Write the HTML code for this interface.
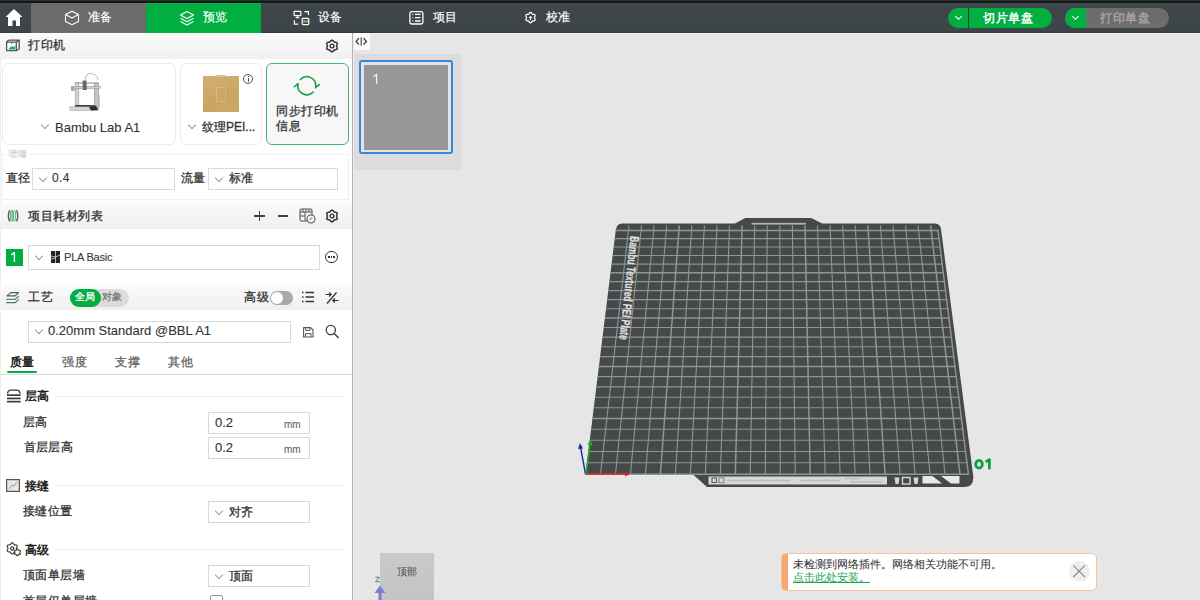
<!DOCTYPE html>
<html><head><meta charset="utf-8">
<style>
*{box-sizing:border-box;margin:0;padding:0}
html,body{width:1200px;height:600px;overflow:hidden;background:#e6e6e6;font-family:"Liberation Sans",sans-serif;}
.a{position:absolute}
.t{position:absolute;white-space:nowrap;line-height:1;-webkit-text-stroke-width:0.3px}
#top{left:0;top:0;width:1200px;height:33px;background:linear-gradient(#2b3131 0,#2b3131 1px,#121818 1px,#121818 3px,#4a5153 3px,#3f4649 4.5px,#3e4548 31px,#363c3e 32px,#363c3e 33px)}
#topline{left:0;top:0;width:1200px;height:3px;background:#161616}
.tab{position:absolute;top:3px;height:30px;color:#fff;font-size:13px}
.combo{position:absolute;background:#fff;border:1px solid #d9d9d9}
.chev{position:absolute;width:6px;height:6px;border-right:1px solid #9a9a9a;border-bottom:1px solid #9a9a9a;transform:rotate(45deg)}
.hdr{position:absolute;left:0;width:352px;background:linear-gradient(#fafafa,#f0f0f0)}
.lbl{font-size:12px;color:#333;letter-spacing:0.4px}
</style></head><body>
<!-- top bar -->
<div id="top" class="a"></div>
<div class="a" style="left:354px;top:33px;width:846px;height:1px;background:#eeeeee"></div>
<!-- home -->
<svg class="a" style="left:5px;top:8px" width="18" height="19" viewBox="0 0 18 19">
<path d="M9 1 L17.5 9 L15 9 L15 18 L11 18 L11 12.5 L7.5 12.5 L7.5 18 L3 18 L3 9 L0.5 9 Z" fill="#fff"/>
</svg>
<!-- tab prepare -->
<div class="a" style="left:31px;top:3px;width:115px;height:30px;background:#6b6b6b"></div>
<svg class="a" style="left:64px;top:10px" width="16" height="16" viewBox="0 0 16 16">
<path d="M8 1.2 L14.5 4.6 L14.5 11.4 L8 14.8 L1.5 11.4 L1.5 4.6 Z M1.5 4.6 L8 8 L14.5 4.6" fill="none" stroke="#fff" stroke-width="1.1" stroke-linejoin="round"/>
</svg>
<div class="t" style="left:88px;top:11px;color:#fff;font-size:12px;-webkit-text-stroke-width:0.15px">准备</div>
<!-- tab preview -->
<div class="a" style="left:146px;top:3px;width:115px;height:30px;background:#00ae42"></div>
<svg class="a" style="left:179px;top:10px" width="16" height="16" viewBox="0 0 16 16">
<path d="M8 1.5 L14.5 5 L8 8.5 L1.5 5 Z" fill="none" stroke="#fff" stroke-width="1.1" stroke-linejoin="round"/>
<path d="M1.5 8.2 L8 11.7 L14.5 8.2 M1.5 11.4 L8 14.9 L14.5 11.4" fill="none" stroke="#fff" stroke-width="1.1" stroke-linejoin="round"/>
</svg>
<div class="t" style="left:203px;top:11px;color:#fff;font-size:12px;-webkit-text-stroke-width:0.15px">预览</div>
<!-- tab device -->
<svg class="a" style="left:290px;top:8px" width="22" height="20" viewBox="290 8 22 20">
<rect x="294.1" y="11.4" width="6.8" height="4.2" rx="0.6" fill="none" stroke="#fff" stroke-width="1.2"/>
<path d="M297.5 15.6 V17.4 M295.8 17.6 H299.2" stroke="#fff" stroke-width="1.1"/>
<path d="M304.3 11.6 H308.4 V15" fill="none" stroke="#fff" stroke-width="1.2"/>
<path d="M294.4 20.2 V24.2 H298.2" fill="none" stroke="#fff" stroke-width="1.2"/>
<rect x="302.2" y="18.4" width="6.6" height="6.2" rx="0.8" fill="none" stroke="#fff" stroke-width="1.2"/>
<path d="M304 20.2 V23 M307 20.2 V23 M304 20.3 L305.5 22 L307 20.3" fill="none" stroke="#ddd" stroke-width="0.7"/>
</svg>
<div class="t" style="left:318px;top:11px;color:#fff;font-size:12px;-webkit-text-stroke-width:0.15px">设备</div>
<!-- tab project -->
<svg class="a" style="left:405px;top:8px" width="22" height="20" viewBox="405 8 22 20">
<rect x="409.9" y="11.6" width="13" height="12.4" rx="1.8" fill="none" stroke="#fff" stroke-width="1.3"/>
<path d="M412.3 14.4 H413.3 M412.3 17.7 H413.3 M412.3 21 H413.3" stroke="#fff" stroke-width="1.1"/>
<path d="M415 14.4 H420.5 M415 17.7 H420.5 M415 21 H420.5" stroke="#fff" stroke-width="1.3"/>
</svg>
<div class="t" style="left:433px;top:11px;color:#fff;font-size:12px;-webkit-text-stroke-width:0.15px">项目</div>
<!-- tab calib -->
<svg class="a" style="left:520px;top:8px" width="22" height="20" viewBox="520 8 22 20">
<path d="M534.50 17.60 L534.56 17.96 L534.73 18.35 L534.94 18.79 L535.10 19.28 L535.14 19.76 L535.00 20.20 L534.69 20.54 L534.25 20.75 L533.75 20.85 L533.26 20.89 L532.84 20.94 L532.50 21.06 L532.22 21.30 L531.97 21.64 L531.69 22.04 L531.35 22.43 L530.95 22.70 L530.50 22.80 L530.05 22.70 L529.65 22.43 L529.31 22.04 L529.03 21.64 L528.78 21.30 L528.50 21.06 L528.16 20.94 L527.74 20.89 L527.25 20.85 L526.75 20.75 L526.31 20.54 L526.00 20.20 L525.86 19.76 L525.90 19.28 L526.06 18.79 L526.27 18.35 L526.44 17.96 L526.50 17.60 L526.44 17.24 L526.27 16.85 L526.06 16.41 L525.90 15.92 L525.86 15.44 L526.00 15.00 L526.31 14.66 L526.75 14.45 L527.25 14.35 L527.74 14.31 L528.16 14.26 L528.50 14.14 L528.78 13.90 L529.03 13.56 L529.31 13.16 L529.65 12.77 L530.05 12.50 L530.50 12.40 L530.95 12.50 L531.35 12.77 L531.69 13.16 L531.97 13.56 L532.22 13.90 L532.50 14.14 L532.84 14.26 L533.26 14.31 L533.75 14.35 L534.25 14.45 L534.69 14.66 L535.00 15.00 L535.14 15.44 L535.10 15.92 L534.94 16.41 L534.73 16.85 L534.56 17.24Z" fill="none" stroke="#fff" stroke-width="1.3"/>
<path d="M528.6 18 L530.5 15.8 L532.4 18 Z M529.9 17.6 H531.1 V20 H529.9 Z" fill="#fff"/>
</svg>
<div class="t" style="left:546px;top:11px;color:#fff;font-size:12px;-webkit-text-stroke-width:0.15px">校准</div>
<!-- right buttons -->
<div class="a" style="left:948px;top:8px;width:104px;height:20px;border-radius:10px;background:#00ae42"></div>
<div class="a" style="left:968px;top:8px;width:1px;height:20px;background:#2d3b33"></div>
<div class="chev" style="left:956px;top:13.5px;border-color:#fff;width:5px;height:5px;border-width:0 1.3px 1.3px 0"></div>
<div class="t" style="left:983px;top:11.5px;color:#fff;font-size:12px;letter-spacing:0.6px;-webkit-text-stroke-width:0.45px">切片单盘</div>
<div class="a" style="left:1065px;top:8px;width:104px;height:20px;border-radius:10px;background:#6d6d6d;overflow:hidden"><div class="a" style="left:0;top:0;width:21px;height:20px;background:#00ae42"></div></div>
<div class="chev" style="left:1073px;top:13.5px;border-color:#fff;width:5px;height:5px;border-width:0 1.3px 1.3px 0"></div>
<div class="t" style="left:1100px;top:11.5px;color:#a9a9a9;font-size:12px;letter-spacing:0.6px;-webkit-text-stroke-width:0.35px">打印单盘</div>

<!-- LEFT PANEL -->
<div class="a" style="left:0;top:33px;width:352px;height:567px;background:#fff"></div>
<div class="a" style="left:352px;top:33px;width:1px;height:567px;background:#b2b2b2"></div><div class="a" style="left:353px;top:33px;width:1px;height:567px;background:#ededed"></div>
<div class="a" style="left:0;top:33px;width:1px;height:567px;background:#efefef"></div>
<!-- header printer -->
<div class="hdr" style="top:34px;height:25px"></div>
<svg class="a" style="left:2px;top:34px" width="24" height="24" viewBox="2 34 24 24">
<path d="M6.6 42.2 H16.3 V50.7 H6.6 Z" fill="#fff" stroke="#555" stroke-width="1.3" stroke-linejoin="round"/>
<path d="M6.6 42.2 Q7.4 40.1 9.2 40.1 H19.2 L16.3 42.2 M16.3 50.7 L19.2 48.7 V40.1" fill="none" stroke="#555" stroke-width="1.3" stroke-linejoin="round"/>
<path d="M8.2 49.4 L10.8 46.6 H15.2 V49.4 Z" fill="#2ea85c"/>
<path d="M10.6 42.6 H12.8 L11.7 44.4 Z" fill="#666"/>
</svg>
<div class="t lbl" style="left:28px;top:39px;font-size:12px;letter-spacing:0.5px;color:#333">打印机</div>
<svg class="a" style="left:324.4px;top:37.6px" width="16" height="16" viewBox="0 0 16 16"><path d="M12.60 8.00 L12.66 8.41 L12.83 8.85 L13.02 9.35 L13.17 9.88 L13.18 10.42 L13.02 10.90 L12.69 11.28 L12.21 11.54 L11.68 11.68 L11.15 11.75 L10.68 11.83 L10.30 11.98 L9.98 12.24 L9.68 12.60 L9.35 13.02 L8.96 13.42 L8.50 13.70 L8.00 13.80 L7.50 13.70 L7.04 13.42 L6.65 13.02 L6.32 12.60 L6.02 12.24 L5.70 11.98 L5.32 11.83 L4.85 11.75 L4.32 11.68 L3.79 11.54 L3.31 11.28 L2.98 10.90 L2.82 10.42 L2.83 9.88 L2.98 9.35 L3.17 8.85 L3.34 8.41 L3.40 8.00 L3.34 7.59 L3.17 7.15 L2.98 6.65 L2.83 6.12 L2.82 5.58 L2.98 5.10 L3.31 4.72 L3.79 4.46 L4.32 4.32 L4.85 4.25 L5.32 4.17 L5.70 4.02 L6.02 3.76 L6.32 3.40 L6.65 2.98 L7.04 2.58 L7.50 2.30 L8.00 2.20 L8.50 2.30 L8.96 2.58 L9.35 2.98 L9.68 3.40 L9.98 3.76 L10.30 4.02 L10.68 4.17 L11.15 4.25 L11.68 4.32 L12.21 4.46 L12.69 4.72 L13.02 5.10 L13.18 5.58 L13.17 6.12 L13.02 6.65 L12.83 7.15 L12.66 7.59Z" fill="none" stroke="#2e2e2e" stroke-width="1.5" stroke-linejoin="round"/><circle cx="8" cy="8" r="1.9" fill="none" stroke="#2e2e2e" stroke-width="1.4"/></svg>
<!-- cards -->
<div class="a" style="left:2px;top:63px;width:174px;height:82px;border:1px solid #ececec;border-radius:6px;background:#fff"></div>
<svg class="a" style="left:65px;top:70px" width="40" height="45" viewBox="0 0 40 45">
<path d="M20 10.5 Q21 2.5 26.3 3.4 Q32.5 4.5 33 10" fill="none" stroke="#a8a8a8" stroke-width="0.8"/>
<rect x="10" y="12.3" width="23.5" height="1.6" fill="#b9b9b9"/>
<rect x="10.2" y="12.5" width="3.6" height="24.5" fill="#d3d3d3" stroke="#9a9a9a" stroke-width="0.6"/>
<rect x="29.3" y="13" width="4" height="27" fill="#c4c4c4" stroke="#8a8a8a" stroke-width="0.6"/>
<rect x="6.5" y="16.4" width="29" height="2.1" fill="#cfcfcf" stroke="#8c8c8c" stroke-width="0.5"/>
<rect x="6" y="16" width="3.5" height="5" fill="#aaa"/>
<path d="M17.6 10.5 L21.5 10.5 L21.8 19.9 L17.6 19.9 Z" fill="#6a6a6a"/>
<path d="M10 35 H29 L28.5 37.5 H10 Z" fill="#3a3a3a"/>
<path d="M4.5 36.8 H33 L32.5 40.5 H5 Z" fill="#d6d6d6" stroke="#9c9c9c" stroke-width="0.5"/>
<path d="M24 37 L31 35.5 L33 40 L26 40.5 Z" fill="#2e2e2e"/>
<path d="M34.5 25 L34.5 38" stroke="#aaa" stroke-width="0.6"/>
</svg>
<div class="chev" style="left:42px;top:122px"></div>
<div class="t" style="left:55px;top:121px;font-size:13px;color:#333;-webkit-text-stroke-width:0.1px">Bambu Lab A1</div>

<div class="a" style="left:180px;top:63px;width:82px;height:82px;border:1px solid #ececec;border-radius:6px;background:#fff"></div>
<div class="a" style="left:203px;top:76px;width:36px;height:36px;background:linear-gradient(160deg,#d2b072,#c9a562 60%,#cda96a)"></div>
<div class="a" style="left:216px;top:74.5px;width:10px;height:2px;background:#d8c49a;border-radius:1px"></div>
<div class="a" style="left:216px;top:87px;width:10px;height:15px;border:1px solid rgba(255,240,210,0.22)"></div>
<div class="a" style="left:243px;top:74px;width:10px;height:10px;border:1px solid #555;border-radius:50%"></div>
<div class="a" style="left:247.5px;top:76px;width:1px;height:1.2px;background:#555"></div>
<div class="a" style="left:247.5px;top:78px;width:1px;height:4px;background:#555"></div>
<div class="chev" style="left:189px;top:122px"></div>
<div class="t" style="left:202px;top:121px;font-size:12px;letter-spacing:0px;color:#333">纹理PEI...</div>

<div class="a" style="left:266px;top:63px;width:83px;height:82px;border:1px solid #3fb86a;border-radius:6px;background:#f7f7f7"></div>
<svg class="a" style="left:290px;top:70px" width="35" height="32" viewBox="290 70 35 32">
<path d="M300.33 79.45 A9 9 0 0 1 315.71 86.95" fill="none" stroke="#1a9e48" stroke-width="1.6" stroke-linecap="round"/>
<path d="M313.27 91.95 A9 9 0 0 1 297.89 84.45" fill="none" stroke="#1a9e48" stroke-width="1.6" stroke-linecap="round"/>
<path d="M319.28 84.66 L315.60 87.74" fill="none" stroke="#1a9e48" stroke-width="1.6" stroke-linecap="round" stroke-linejoin="round"/>
<path d="M294.32 86.74 L298.00 83.66" fill="none" stroke="#1a9e48" stroke-width="1.6" stroke-linecap="round" stroke-linejoin="round"/>
</svg>
<div class="t" style="left:276px;top:104px;font-size:12px;letter-spacing:0.5px;color:#333;line-height:15px;white-space:normal;width:70px">同步打印机<br>信息</div>

<!-- nozzle group -->
<div class="a" style="left:2px;top:154px;width:347px;height:46px;border:1px solid #efefef"></div>
<div class="t" style="left:7px;top:149.5px;font-size:9px;color:#c4c4c4;background:#fff;padding:0 2px;-webkit-text-stroke-width:0">喷嘴</div>
<div class="t lbl" style="left:5.5px;top:172px">直径</div>
<div class="combo" style="left:32px;top:168px;width:143px;height:22px"></div>
<div class="chev" style="left:40px;top:175px"></div>
<div class="t lbl" style="left:52px;top:172px;-webkit-text-stroke-width:0.1px">0.4</div>
<div class="t lbl" style="left:181px;top:172px">流量</div>
<div class="combo" style="left:208px;top:168px;width:130px;height:22px"></div>
<div class="chev" style="left:216px;top:175px"></div>
<div class="t lbl" style="left:229px;top:172px">标准</div>

<!-- filament header -->
<div class="hdr" style="top:203px;height:26px"></div>
<svg class="a" style="left:2px;top:204px" width="24" height="24" viewBox="2 204 24 24">
<path d="M9.6 210.2 Q7.2 215.8 9.6 221.4 M16.6 210.2 Q19 215.8 16.6 221.4" fill="none" stroke="#5e5e5e" stroke-width="1.4"/>
<rect x="10.6" y="210.6" width="2.4" height="10.4" rx="1.1" fill="#9fe0b5" stroke="#3f9e62" stroke-width="0.8"/>
<rect x="13.4" y="210.6" width="2.2" height="10.4" rx="1.1" fill="#d8f2e0" stroke="#3f9e62" stroke-width="0.7"/>
</svg>
<div class="t" style="left:28px;top:209.5px;font-size:12px;letter-spacing:0.5px;color:#333">项目耗材列表</div>
<div class="a" style="left:254px;top:215.3px;width:10.5px;height:1.3px;background:#444"></div>
<div class="a" style="left:258.6px;top:210.7px;width:1.3px;height:10.5px;background:#444"></div>
<div class="a" style="left:277.8px;top:215.3px;width:10.5px;height:1.3px;background:#444"></div>
<svg class="a" style="left:299px;top:208px" width="17" height="16" viewBox="0 0 17 16">
<rect x="1" y="1" width="12" height="12" rx="1.5" fill="none" stroke="#555" stroke-width="1.1"/>
<path d="M1 4 H13 M4 1 V4 M7 1 V4 M10 1 V4 M1 8 H6 M6 4 V13" stroke="#555" stroke-width="1"/>
<circle cx="12" cy="11" r="4" fill="#f3f3f3" stroke="#555" stroke-width="1.1"/>
<path d="M10.5 12 L13 9.5" stroke="#555" stroke-width="1"/>
</svg>
<svg class="a" style="left:324.2px;top:208.2px" width="16" height="16" viewBox="0 0 16 16"><path d="M12.60 8.00 L12.66 8.41 L12.83 8.85 L13.02 9.35 L13.17 9.88 L13.18 10.42 L13.02 10.90 L12.69 11.28 L12.21 11.54 L11.68 11.68 L11.15 11.75 L10.68 11.83 L10.30 11.98 L9.98 12.24 L9.68 12.60 L9.35 13.02 L8.96 13.42 L8.50 13.70 L8.00 13.80 L7.50 13.70 L7.04 13.42 L6.65 13.02 L6.32 12.60 L6.02 12.24 L5.70 11.98 L5.32 11.83 L4.85 11.75 L4.32 11.68 L3.79 11.54 L3.31 11.28 L2.98 10.90 L2.82 10.42 L2.83 9.88 L2.98 9.35 L3.17 8.85 L3.34 8.41 L3.40 8.00 L3.34 7.59 L3.17 7.15 L2.98 6.65 L2.83 6.12 L2.82 5.58 L2.98 5.10 L3.31 4.72 L3.79 4.46 L4.32 4.32 L4.85 4.25 L5.32 4.17 L5.70 4.02 L6.02 3.76 L6.32 3.40 L6.65 2.98 L7.04 2.58 L7.50 2.30 L8.00 2.20 L8.50 2.30 L8.96 2.58 L9.35 2.98 L9.68 3.40 L9.98 3.76 L10.30 4.02 L10.68 4.17 L11.15 4.25 L11.68 4.32 L12.21 4.46 L12.69 4.72 L13.02 5.10 L13.18 5.58 L13.17 6.12 L13.02 6.65 L12.83 7.15 L12.66 7.59Z" fill="none" stroke="#2e2e2e" stroke-width="1.5" stroke-linejoin="round"/><circle cx="8" cy="8" r="1.9" fill="none" stroke="#2e2e2e" stroke-width="1.4"/></svg>
<!-- filament row -->
<div class="a" style="left:6px;top:249px;width:17px;height:17px;background:#00ae42"></div>
<svg class="a" style="left:0;top:240px" width="30" height="30" viewBox="0 240 30 30"><path d="M11.2 254.8 L14.4 252.6 V262" fill="none" stroke="#fff" stroke-width="1.4" stroke-linejoin="round"/></svg>
<div class="combo" style="left:28px;top:245px;width:292px;height:25px"></div>
<div class="chev" style="left:36px;top:253px"></div>
<svg class="a" style="left:51px;top:251px" width="9" height="12" viewBox="0 0 9 12">
<rect x="0" y="0" width="9" height="12" fill="#222"/>
<path d="M4.5 0 V12 M0 5 L4.5 6 L9 4 M0 8 L4.5 7" stroke="#ddd" stroke-width="0.8" fill="none"/>
</svg>
<div class="t" style="left:64px;top:251.5px;font-size:11px;color:#3a3a3a;letter-spacing:-0.2px;-webkit-text-stroke-width:0.1px">PLA Basic</div>
<div class="a" style="left:325.3px;top:250.6px;width:12.6px;height:12.6px;border:1.5px solid #333;border-radius:50%"></div>
<div class="a" style="left:328.3px;top:256.1px;width:1.6px;height:1.6px;background:#333"></div>
<div class="a" style="left:330.8px;top:256.1px;width:1.6px;height:1.6px;background:#333"></div>
<div class="a" style="left:333.3px;top:256.1px;width:1.6px;height:1.6px;background:#333"></div>

<!-- process header -->
<div class="hdr" style="top:285px;height:25px"></div>
<svg class="a" style="left:2px;top:286px" width="22" height="22" viewBox="0 0 22 22">
<path d="M4.8 9.9 L8.8 6.6 H16.5 L13.2 9.9 Z" fill="none" stroke="#5a5a5a" stroke-width="1.1" stroke-linejoin="round"/>
<path d="M4.8 13.3 H13.2 L16.5 10.2" fill="none" stroke="#3f9a62" stroke-width="1.3" stroke-linecap="round"/>
<path d="M4.8 16.7 H13.2 L16.5 13.6" fill="none" stroke="#5f6b64" stroke-width="1.2" stroke-linecap="round"/>
</svg>
<div class="t" style="left:28px;top:291px;font-size:12px;letter-spacing:0.5px;color:#333">工艺</div>
<div class="a" style="left:70px;top:288.5px;width:59px;height:18px;border-radius:9px;background:#dcdcdc"></div>
<div class="a" style="left:70px;top:288.5px;width:31px;height:18px;border-radius:9px;background:#00ae42"></div>
<div class="t" style="left:75px;top:292px;font-size:10px;color:#fff">全局</div>
<div class="t" style="left:102px;top:292px;font-size:10px;color:#777">对象</div>
<div class="t" style="left:244px;top:291px;font-size:12px;letter-spacing:0.5px;color:#333">高级</div>
<div class="a" style="left:270px;top:290.5px;width:23px;height:14px;border-radius:7px;background:#a9a9a9"></div>
<div class="a" style="left:271px;top:291.5px;width:12px;height:12px;border-radius:50%;background:#fff"></div>
<svg class="a" style="left:301px;top:291px" width="14" height="12" viewBox="0 0 14 12">
<path d="M1 1.5 H2.5 M4.5 1.5 H13 M1 6 H2.5 M4.5 6 H13 M1 10.5 H2.5 M4.5 10.5 H13" stroke="#333" stroke-width="1.4"/>
</svg>
<svg class="a" style="left:324px;top:290px" width="16" height="16" viewBox="0 0 16 16">
<path d="M3 13.5 L12.5 2.5" stroke="#333" stroke-width="1.3"/>
<path d="M1.5 4.5 H7 M5 2.5 L7.2 4.5 L5 6.5 M14.5 10.5 H9 M11 8.5 L8.8 10.5 L11 12.5" fill="none" stroke="#333" stroke-width="1.2"/>
</svg>
<div class="combo" style="left:28px;top:320.5px;width:263px;height:22px"></div>
<div class="chev" style="left:36px;top:327px"></div>
<div class="t" style="left:48px;top:324px;font-size:13px;color:#333;-webkit-text-stroke-width:0.1px">0.20mm Standard @BBL A1</div>
<svg class="a" style="left:300px;top:324px" width="16" height="16" viewBox="300 324 16 16">
<path d="M303.6 327.6 H310.6 L313 330 V337 H303.6 Z" fill="none" stroke="#555" stroke-width="1.1" stroke-linejoin="round"/>
<path d="M305.8 327.8 V330.4 H309.8 V327.8 M305.6 336.8 V333.6 H311 V336.8" fill="none" stroke="#555" stroke-width="1"/>
</svg>
<svg class="a" style="left:322px;top:322px" width="20" height="20" viewBox="322 322 20 20">
<circle cx="330.8" cy="330" r="4.6" fill="none" stroke="#3a3a3a" stroke-width="1.3"/>
<path d="M334.2 333.4 L338.2 337.4" stroke="#3a3a3a" stroke-width="1.4" stroke-linecap="round"/>
</svg>
<!-- tabs -->
<div class="t" style="left:9.5px;top:356px;font-size:12px;letter-spacing:0.5px;color:#222;font-weight:bold;-webkit-text-stroke-width:0">质量</div>
<div class="a" style="left:7px;top:371px;width:30px;height:2px;background:#00ae42;border-radius:1px"></div>
<div class="t" style="left:62px;top:356px;font-size:12px;letter-spacing:0.5px;color:#666">强度</div>
<div class="t" style="left:115px;top:356px;font-size:12px;letter-spacing:0.5px;color:#666">支撑</div>
<div class="t" style="left:168px;top:356px;font-size:12px;letter-spacing:0.5px;color:#666">其他</div>
<div class="a" style="left:0;top:374px;width:352px;height:1px;background:#dadada"></div>

<!-- settings -->
<svg class="a" style="left:2px;top:384px" width="24" height="24" viewBox="0 0 24 24">
<path d="M5.6 9.8 Q5.6 6.2 9 6.2 H14.6 Q18 6.2 18 9.8" fill="none" stroke="#3c3c3c" stroke-width="1.3"/>
<rect x="5" y="10.3" width="13.6" height="1.7" fill="#3c3c3c"/>
<rect x="5" y="13.6" width="13.6" height="1.7" fill="#3c3c3c"/>
<rect x="5" y="16.8" width="13.6" height="1.7" fill="#3c3c3c"/>
</svg>
<div class="t" style="left:25px;top:389.5px;font-size:12px;color:#222;font-weight:bold;-webkit-text-stroke-width:0">层高</div>
<div class="a" style="left:55px;top:396px;width:288px;height:1px;background:#ececec"></div>
<div class="t lbl" style="left:23px;top:416px">层高</div>
<div class="combo" style="left:208px;top:412px;width:102px;height:22px"></div>
<div class="t" style="left:215px;top:416px;font-size:13px;color:#333;-webkit-text-stroke-width:0.1px">0.2</div>
<div class="t" style="left:284px;top:420px;font-size:10px;color:#666;-webkit-text-stroke-width:0.1px">mm</div>
<div class="t lbl" style="left:23.5px;top:441px">首层层高</div>
<div class="combo" style="left:208px;top:437px;width:102px;height:22px"></div>
<div class="t" style="left:215px;top:441px;font-size:13px;color:#333;-webkit-text-stroke-width:0.1px">0.2</div>
<div class="t" style="left:284px;top:445px;font-size:10px;color:#666;-webkit-text-stroke-width:0.1px">mm</div>

<svg class="a" style="left:6px;top:479px" width="14" height="13" viewBox="0 0 14 13">
<rect x="0.6" y="0.6" width="12.8" height="11.8" fill="#e6e6e6" stroke="#555" stroke-width="1.2"/>
<path d="M3 10 L6 6 L8 7 L11 3" fill="none" stroke="#888" stroke-width="0.8"/>
</svg>
<div class="t" style="left:25px;top:479.5px;font-size:12px;color:#222;font-weight:bold;-webkit-text-stroke-width:0">接缝</div>
<div class="a" style="left:55px;top:485px;width:288px;height:1px;background:#ececec"></div>
<div class="t lbl" style="left:23px;top:505px">接缝位置</div>
<div class="combo" style="left:208px;top:501px;width:102px;height:22px"></div>
<div class="chev" style="left:216px;top:508px"></div>
<div class="t" style="left:229px;top:505.5px;font-size:12px;color:#333">对齐</div>

<svg class="a" style="left:2px;top:536px" width="24" height="24" viewBox="0 0 24 24">
<path d="M14.40 12.40 L14.48 12.77 L14.68 13.19 L14.93 13.67 L15.13 14.20 L15.19 14.73 L15.05 15.20 L14.71 15.56 L14.22 15.77 L13.66 15.86 L13.12 15.89 L12.66 15.92 L12.30 16.04 L12.01 16.29 L11.76 16.68 L11.47 17.13 L11.11 17.57 L10.68 17.89 L10.20 18.00 L9.72 17.89 L9.29 17.57 L8.93 17.13 L8.64 16.68 L8.39 16.29 L8.10 16.04 L7.74 15.92 L7.28 15.89 L6.74 15.86 L6.18 15.77 L5.69 15.56 L5.35 15.20 L5.21 14.73 L5.27 14.20 L5.47 13.67 L5.72 13.19 L5.92 12.77 L6.00 12.40 L5.92 12.03 L5.72 11.61 L5.47 11.13 L5.27 10.60 L5.21 10.07 L5.35 9.60 L5.69 9.24 L6.18 9.03 L6.74 8.94 L7.28 8.91 L7.74 8.88 L8.10 8.76 L8.39 8.51 L8.64 8.12 L8.93 7.67 L9.29 7.23 L9.72 6.91 L10.20 6.80 L10.68 6.91 L11.11 7.23 L11.47 7.67 L11.76 8.12 L12.01 8.51 L12.30 8.76 L12.66 8.88 L13.12 8.91 L13.66 8.94 L14.22 9.03 L14.71 9.24 L15.05 9.60 L15.19 10.07 L15.13 10.60 L14.93 11.13 L14.68 11.61 L14.48 12.03Z" fill="none" stroke="#444" stroke-width="1.2"/>
<circle cx="10.2" cy="12.4" r="1.6" fill="none" stroke="#444" stroke-width="1.3"/>
<path d="M17.85 16.40 L17.90 16.62 L18.03 16.86 L18.20 17.15 L18.34 17.47 L18.38 17.79 L18.30 18.07 L18.09 18.29 L17.79 18.41 L17.45 18.45 L17.12 18.45 L16.84 18.46 L16.62 18.52 L16.46 18.68 L16.31 18.91 L16.15 19.20 L15.94 19.48 L15.69 19.68 L15.40 19.75 L15.11 19.68 L14.86 19.48 L14.65 19.20 L14.49 18.91 L14.34 18.68 L14.18 18.52 L13.96 18.46 L13.68 18.45 L13.35 18.45 L13.01 18.41 L12.71 18.29 L12.50 18.07 L12.42 17.79 L12.46 17.47 L12.60 17.15 L12.77 16.86 L12.90 16.62 L12.95 16.40 L12.90 16.18 L12.77 15.94 L12.60 15.65 L12.46 15.33 L12.42 15.01 L12.50 14.72 L12.71 14.51 L13.01 14.39 L13.35 14.35 L13.68 14.35 L13.96 14.34 L14.17 14.28 L14.34 14.12 L14.49 13.89 L14.65 13.60 L14.86 13.32 L15.11 13.12 L15.40 13.05 L15.69 13.12 L15.94 13.32 L16.15 13.60 L16.31 13.89 L16.46 14.12 L16.62 14.28 L16.84 14.34 L17.12 14.35 L17.45 14.35 L17.79 14.39 L18.09 14.51 L18.30 14.72 L18.38 15.01 L18.34 15.33 L18.20 15.65 L18.03 15.94 L17.90 16.18Z" fill="#fff" stroke="#444" stroke-width="1.2"/>
</svg>
<div class="t" style="left:25px;top:543.5px;font-size:12px;color:#222;font-weight:bold;-webkit-text-stroke-width:0">高级</div>
<div class="a" style="left:55px;top:549px;width:288px;height:1px;background:#ececec"></div>
<div class="t lbl" style="left:23px;top:569px">顶面单层墙</div>
<div class="combo" style="left:208px;top:565px;width:102px;height:22px"></div>
<div class="chev" style="left:216px;top:572px"></div>
<div class="t" style="left:229px;top:569.5px;font-size:12px;color:#333">顶面</div>
<div class="t lbl" style="left:23px;top:595px">首层仅单层墙</div>
<div class="a" style="left:210px;top:595px;width:13px;height:13px;border:1px solid #999;border-radius:2px;background:#fff"></div>

<!-- 3D VIEW -->
<div class="a" style="left:354px;top:33px;width:16px;height:17px;background:#fafafa"></div>
<svg class="a" style="left:353px;top:33px" width="18" height="16" viewBox="353 33 18 16">
<path d="M358.9 38.3 L356.2 41.4 L358.9 44.6 M363.6 38.3 L366.4 41.4 L363.6 44.6" fill="none" stroke="#3a3a3a" stroke-width="1.3"/>
<path d="M361.3 37.2 V45.6" stroke="#6a6a6a" stroke-width="1.5"/>
</svg>
<div class="a" style="left:354px;top:54px;width:107px;height:116px;background:#dcdcdc;border-radius:3px"></div>
<div class="a" style="left:359px;top:60px;width:94px;height:94px;border:2px solid #3587da;border-radius:3px;background:#e3e3e3"></div>
<div class="a" style="left:364px;top:64.5px;width:84px;height:85px;background:#979797"></div>
<svg class="a" style="left:360px;top:60px" width="30" height="30" viewBox="360 60 30 30"><path d="M373.5 76.8 L376.6 74.4 V83.7" fill="none" stroke="#f2f2f2" stroke-width="1.3" stroke-linejoin="round"/></svg>

<!-- bed -->
<svg class="a" style="left:0;top:0" width="1200" height="600" viewBox="0 0 1200 600">
<path d="M622 223.6 H735 L745.2 218 H811.2 L822.2 223.6 H934 Q940 223.6 941 229 L973 474 Q975 487 964 487 H707 L693 474.5 H585.5 L615.8 230 Q617 223.6 622 223.6 Z" fill="#454949"/>
<g stroke="#919595" fill="none">
<line x1="600.48" y1="474.30" x2="629.00" y2="225.49" stroke-width="1.1"/>
<line x1="615.46" y1="474.30" x2="641.56" y2="225.49" stroke-width="1.1"/>
<line x1="630.44" y1="474.30" x2="654.13" y2="225.49" stroke-width="1.1"/>
<line x1="645.42" y1="474.30" x2="666.70" y2="225.49" stroke-width="1.1"/>
<line x1="660.40" y1="474.30" x2="679.27" y2="225.49" stroke-width="1.5"/>
<line x1="675.38" y1="474.30" x2="691.84" y2="225.49" stroke-width="1.1"/>
<line x1="690.36" y1="474.30" x2="704.41" y2="225.49" stroke-width="1.1"/>
<line x1="705.34" y1="474.30" x2="716.97" y2="225.49" stroke-width="1.1"/>
<line x1="720.32" y1="474.30" x2="729.54" y2="225.49" stroke-width="1.1"/>
<line x1="735.30" y1="474.30" x2="742.11" y2="225.49" stroke-width="1.5"/>
<line x1="750.28" y1="474.30" x2="754.68" y2="225.49" stroke-width="1.1"/>
<line x1="765.26" y1="474.30" x2="767.25" y2="225.49" stroke-width="1.1"/>
<line x1="780.24" y1="474.30" x2="779.81" y2="225.49" stroke-width="1.1"/>
<line x1="795.22" y1="474.30" x2="792.38" y2="225.49" stroke-width="1.1"/>
<line x1="810.20" y1="474.30" x2="804.95" y2="225.49" stroke-width="1.5"/>
<line x1="825.18" y1="474.30" x2="817.52" y2="225.49" stroke-width="1.1"/>
<line x1="840.16" y1="474.30" x2="830.09" y2="225.49" stroke-width="1.1"/>
<line x1="855.14" y1="474.30" x2="842.66" y2="225.49" stroke-width="1.1"/>
<line x1="870.12" y1="474.30" x2="855.22" y2="225.49" stroke-width="1.1"/>
<line x1="885.10" y1="474.30" x2="867.79" y2="225.49" stroke-width="1.5"/>
<line x1="900.08" y1="474.30" x2="880.36" y2="225.49" stroke-width="1.1"/>
<line x1="915.06" y1="474.30" x2="892.93" y2="225.49" stroke-width="1.1"/>
<line x1="930.04" y1="474.30" x2="905.50" y2="225.49" stroke-width="1.1"/>
<line x1="945.02" y1="474.30" x2="918.07" y2="225.49" stroke-width="1.1"/>
<line x1="960.00" y1="474.30" x2="930.63" y2="225.49" stroke-width="1.5"/>
<line x1="968.39" y1="474.30" x2="937.87" y2="229.49" stroke-width="1.4"/>
<line x1="585.50" y1="474.30" x2="968.99" y2="474.30" stroke-width="1.5"/>
<line x1="586.93" y1="462.80" x2="967.56" y2="462.80" stroke-width="1.1"/>
<line x1="588.34" y1="451.47" x2="966.16" y2="451.47" stroke-width="1.1"/>
<line x1="589.72" y1="440.31" x2="964.78" y2="440.31" stroke-width="1.1"/>
<line x1="591.09" y1="429.31" x2="963.42" y2="429.31" stroke-width="1.1"/>
<line x1="592.44" y1="418.47" x2="962.07" y2="418.47" stroke-width="1.5"/>
<line x1="593.77" y1="407.79" x2="960.75" y2="407.79" stroke-width="1.1"/>
<line x1="595.08" y1="397.25" x2="959.45" y2="397.25" stroke-width="1.1"/>
<line x1="596.37" y1="386.87" x2="958.16" y2="386.87" stroke-width="1.1"/>
<line x1="597.64" y1="376.63" x2="956.89" y2="376.63" stroke-width="1.1"/>
<line x1="598.90" y1="366.54" x2="955.64" y2="366.54" stroke-width="1.5"/>
<line x1="600.13" y1="356.58" x2="954.41" y2="356.58" stroke-width="1.1"/>
<line x1="601.35" y1="346.76" x2="953.19" y2="346.76" stroke-width="1.1"/>
<line x1="602.56" y1="337.08" x2="951.99" y2="337.08" stroke-width="1.1"/>
<line x1="603.75" y1="327.53" x2="950.81" y2="327.53" stroke-width="1.1"/>
<line x1="604.92" y1="318.10" x2="949.64" y2="318.10" stroke-width="1.5"/>
<line x1="606.07" y1="308.80" x2="948.49" y2="308.80" stroke-width="1.1"/>
<line x1="607.21" y1="299.63" x2="947.36" y2="299.63" stroke-width="1.1"/>
<line x1="608.34" y1="290.58" x2="946.23" y2="290.58" stroke-width="1.1"/>
<line x1="609.45" y1="281.64" x2="945.13" y2="281.64" stroke-width="1.1"/>
<line x1="610.54" y1="272.83" x2="944.04" y2="272.83" stroke-width="1.5"/>
<line x1="611.63" y1="264.12" x2="942.96" y2="264.12" stroke-width="1.1"/>
<line x1="612.69" y1="255.53" x2="941.89" y2="255.53" stroke-width="1.1"/>
<line x1="613.75" y1="247.05" x2="940.84" y2="247.05" stroke-width="1.1"/>
<line x1="614.79" y1="238.67" x2="939.81" y2="238.67" stroke-width="1.1"/>
<line x1="615.82" y1="230.41" x2="938.78" y2="230.41" stroke-width="1.5"/>
</g>
<rect x="751.5" y="222.8" width="54.5" height="1.8" fill="#b0b0b0"/>
<rect x="708.5" y="476.5" width="178.5" height="8" fill="#d7d7d7"/>
<rect x="712" y="478" width="4.5" height="4.5" fill="none" stroke="#555" stroke-width="1"/>
<rect x="719" y="477.8" width="5" height="5" fill="none" stroke="#777" stroke-width="0.9"/>
<path d="M727 480.5 H790 M800 480.5 H840 M845 478.5 H860 M850 482 H882" stroke="#bdbdbd" stroke-width="1.3"/>
<path d="M894.5 477.5 H899.5 L898.5 484 H895.5 Z" fill="#d8d8d8"/>
<rect x="902.5" y="477.5" width="7.5" height="6.5" fill="none" stroke="#d8d8d8" stroke-width="1.4"/>
<path d="M913.5 477.5 H918.5 L917.5 484 H914.5 Z" fill="#d8d8d8"/>
<path d="M922.5 476 H932.5 L942 483.5 H922.5 Z M941 476 H959.5 V483.5 H951 Z" fill="#e8e8e8"/>
<text transform="translate(629,288) rotate(96)" text-anchor="middle" dominant-baseline="central" font-size="12.5" font-weight="bold" fill="#dedede" stroke="#dedede" stroke-width="0.3" textLength="104" lengthAdjust="spacingAndGlyphs" font-family="Liberation Sans">Bambu Textured PEI Plate</text>
<!-- axes -->
<path d="M585 474 L627 474" stroke="#d62020" stroke-width="1.6"/>
<path d="M625 471.5 L630 474 L625 476.5 Z" fill="#d62020"/>
<path d="M585.5 474 L580.5 447" stroke="#1a2aa0" stroke-width="1.4"/>
<path d="M578 449 L580 443 L583 448.5 Z" fill="#1a2aa0"/>
<path d="M586 474 L590 443" stroke="#19b030" stroke-width="1.6"/>
<path d="M587.5 445 L590.5 439 L592.5 445.5 Z" fill="#19b030"/>
</svg>

<svg class="a" style="left:970px;top:455px" width="30" height="20" viewBox="970 455 30 20">
<ellipse cx="979" cy="464.2" rx="3.3" ry="3.9" fill="none" stroke="#0a9e3e" stroke-width="2.7"/>
<path d="M985.6 461.8 L989.4 459.6 V469.3" fill="none" stroke="#0a9e3e" stroke-width="2.7" stroke-linejoin="round"/>
</svg>

<!-- view cube -->
<div class="a" style="left:380px;top:552.5px;width:54px;height:48px;background:linear-gradient(#c9c9c9,#c4c4c4)"></div>
<div class="t" style="left:396.5px;top:566.5px;font-size:10px;color:#555;-webkit-text-stroke-width:0.1px">顶部</div>
<div class="t" style="left:375px;top:576px;font-size:8px;color:#6a8aa0">Z</div>
<svg class="a" style="left:373px;top:585px" width="14" height="15" viewBox="0 0 14 15">
<path d="M7 0.5 L12.5 8 L8.5 8 V15 H5.5 V8 L1.5 8 Z" fill="#7c7fd0"/>
</svg>

<!-- notification -->
<div class="a" style="left:781px;top:553px;width:316px;height:38px;border:1.5px solid #f1c3a2;border-radius:5px;background:#fff;overflow:hidden"><div class="a" style="left:0;top:0;width:6px;height:38px;background:#f5a86e"></div></div>
<div class="t" style="left:793px;top:559px;font-size:11px;color:#333;-webkit-text-stroke-width:0.05px">未检测到网络插件。网络相关功能不可用。</div>
<div class="t" style="left:793px;top:572px;font-size:11px;color:#1aa64c;text-decoration:underline;-webkit-text-stroke-width:0.05px">点击此处安装。</div>
<div class="a" style="left:1068.7px;top:560.7px;width:21px;height:21px;border-radius:50%;background:#eeeeee"></div>
<svg class="a" style="left:1071px;top:563px" width="16" height="16" viewBox="0 0 16 16">
<path d="M2.3 2.3 L13.9 14 M13.9 2.3 L2.3 14" stroke="#8a8a8a" stroke-width="1.1"/>
</svg>
</body></html>
